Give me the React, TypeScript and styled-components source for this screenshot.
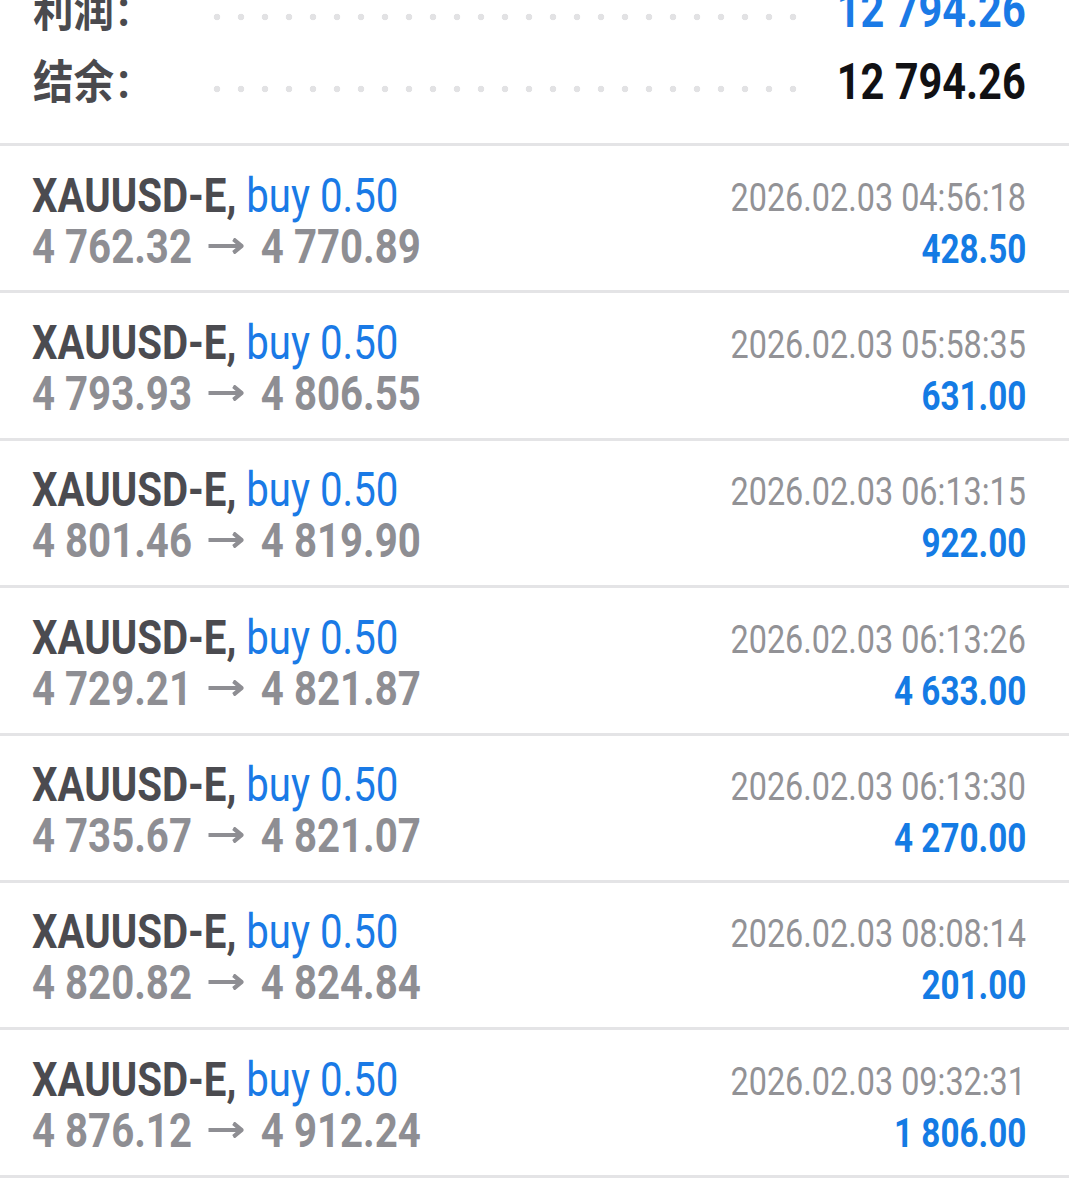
import React from "react";
import styled, { createGlobalStyle } from "styled-components";

type Deal = {
  symbol: string;
  side: string;
  volume: string;
  open: string;
  close: string;
  time: string;
  profit: string;
};

const deals: Deal[] = [
  { symbol: "XAUUSD-E", side: "buy", volume: "0.50", open: "4 762.32", close: "4 770.89", time: "2026.02.03 04:56:18", profit: "428.50" },
  { symbol: "XAUUSD-E", side: "buy", volume: "0.50", open: "4 793.93", close: "4 806.55", time: "2026.02.03 05:58:35", profit: "631.00" },
  { symbol: "XAUUSD-E", side: "buy", volume: "0.50", open: "4 801.46", close: "4 819.90", time: "2026.02.03 06:13:15", profit: "922.00" },
  { symbol: "XAUUSD-E", side: "buy", volume: "0.50", open: "4 729.21", close: "4 821.87", time: "2026.02.03 06:13:26", profit: "4 633.00" },
  { symbol: "XAUUSD-E", side: "buy", volume: "0.50", open: "4 735.67", close: "4 821.07", time: "2026.02.03 06:13:30", profit: "4 270.00" },
  { symbol: "XAUUSD-E", side: "buy", volume: "0.50", open: "4 820.82", close: "4 824.84", time: "2026.02.03 08:08:14", profit: "201.00" },
  { symbol: "XAUUSD-E", side: "buy", volume: "0.50", open: "4 876.12", close: "4 912.24", time: "2026.02.03 09:32:31", profit: "1 806.00" },
];

const GlobalStyle = createGlobalStyle`
  html, body {
    margin: 0;
    padding: 0;
    background: #ffffff;
  }
  body {
    font-family: Roboto, "Noto Sans CJK SC", sans-serif;
    overflow: hidden;
  }
`;

const Page = styled.main`
  width: 1069px;
  height: 1184px;
  overflow: hidden;
  background: #ffffff;
`;

// condensed look: Roboto squeezed horizontally
const Cond = styled.span<{ $origin?: "left" | "right"; $scale?: number }>`
  display: inline-block;
  flex-shrink: 0;
  white-space: nowrap;
  transform: scaleX(${p => p.$scale ?? 0.83});
  transform-origin: ${p => (p.$origin === "right" ? "right center" : "left center")};
`;

const Summary = styled.section`
  margin-top: -27px;
  padding: 0 43px 26px 33px;
`;

const SummaryRow = styled.div`
  height: 72px;
  display: grid;
  grid-template-columns: 172px 600px minmax(0, 1fr);
  align-items: center;
`;

const SummaryLabel = styled.div`
  font-family: Roboto, "Noto Sans CJK SC", sans-serif;
  font-weight: 700;
  font-size: 46px;
  color: #4a4a4e;
  line-height: 72px;
`;

const Colon = styled.span`
  font-size: 50px;
  margin-left: 4px;
`;

const Leader = styled.div`
  height: 12px;
  margin-top: 14px;
  background-image: radial-gradient(circle at 12px 6px, #e2e2e4 3px, transparent 3.6px);
  background-size: 24px 12px;
  background-repeat: repeat-x;
`;

const SummaryValue = styled.div<{ $accent?: boolean }>`
  min-width: 0;
  display: flex;
  justify-content: flex-end;
  font-weight: 700;
  font-size: 50px;
  line-height: 72px;
  color: ${p => (p.$accent ? "#1a7ae6" : "#111114")};
`;

const List = styled.div`
  border-top: 3px solid #e4e4e6;
`;

const Row = styled.div`
  height: 144.4px;
  border-bottom: 3px solid #e4e4e6;
  display: flex;
  justify-content: space-between;
  padding: 0 43px 0 32px;
`;

const LeftCol = styled.div`
  padding-top: 23.5px;
  display: flex;
  flex-direction: column;
`;

const RightCol = styled.div`
  padding-top: 26.5px;
  display: flex;
  flex-direction: column;
  align-items: flex-end;
  text-align: right;
`;

const TitleLine = styled.div`
  font-size: 49px;
  line-height: 51px;
  height: 51px;
`;

const Symbol = styled.span`
  font-weight: 700;
  color: #4b4b50;
`;

const Side = styled.span`
  font-weight: 400;
  color: #1a7ae6;
`;

const PriceLine = styled.div`
  font-size: 49px;
  line-height: 51px;
  height: 51px;
  font-weight: 700;
  color: #8e8e93;
`;

const ArrowIcon = styled.svg`
  width: 43px;
  height: 16px;
  margin: 0 21px 0 20px;
  vertical-align: 9px;
`;

const Arrow: React.FC = () => (
  <ArrowIcon viewBox="0 0 43 16" fill="none" stroke="currentColor">
    <path d="M0 8 H40" strokeWidth="4.2" />
    <path d="M30.5 1.2 L40.5 8 L30.5 14.8" strokeWidth="4.6" strokeLinejoin="miter" />
  </ArrowIcon>
);

const Time = styled.div`
  font-size: 39px;
  line-height: 51px;
  height: 51px;
  color: #929296;
`;

const Profit = styled.div`
  font-size: 40px;
  line-height: 51px;
  height: 51px;
  font-weight: 700;
  color: #147be4;
`;

const DealRow: React.FC<{ deal: Deal }> = ({ deal }) => (
  <Row>
    <LeftCol>
      <TitleLine>
        <Cond $scale={0.82}>
          <Symbol>{deal.symbol},</Symbol> <Side>{deal.side} {deal.volume}</Side>
        </Cond>
      </TitleLine>
      <PriceLine>
        <Cond $scale={0.82}>
          {deal.open}
          <Arrow />
          {deal.close}
        </Cond>
      </PriceLine>
    </LeftCol>
    <RightCol>
      <Time>
        <Cond $origin="right">{deal.time}</Cond>
      </Time>
      <Profit>
        <Cond $origin="right">{deal.profit}</Cond>
      </Profit>
    </RightCol>
  </Row>
);

export default function App() {
  return (
    <Page>
      <GlobalStyle />
      <Summary>
        <SummaryRow>
          <SummaryLabel>
            <Cond $scale={0.88}>
              利润<Colon>:</Colon>
            </Cond>
          </SummaryLabel>
          <Leader />
          <SummaryValue $accent>
            <Cond $origin="right">12 794.26</Cond>
          </SummaryValue>
        </SummaryRow>
        <SummaryRow>
          <SummaryLabel>
            <Cond $scale={0.88}>
              结余<Colon>:</Colon>
            </Cond>
          </SummaryLabel>
          <Leader />
          <SummaryValue>
            <Cond $origin="right">12 794.26</Cond>
          </SummaryValue>
        </SummaryRow>
      </Summary>
      <List>
        {deals.map((d, i) => (
          <DealRow key={i} deal={d} />
        ))}
      </List>
    </Page>
  );
}
